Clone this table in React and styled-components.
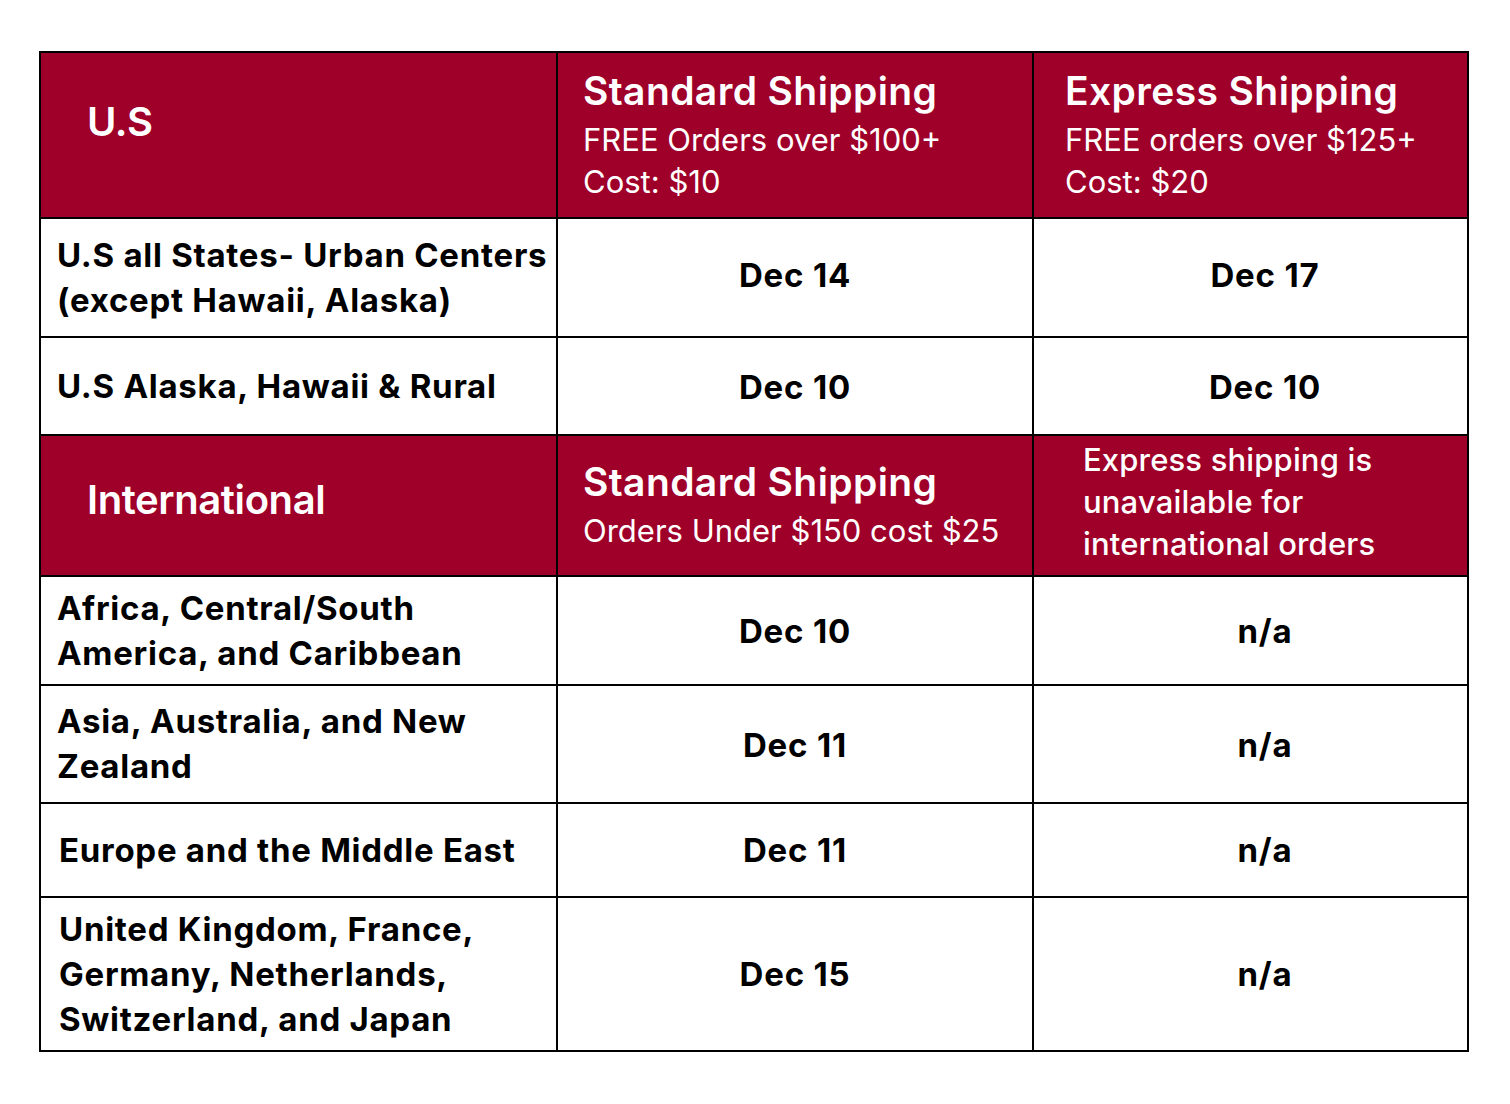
import React from "react";
import styled, { createGlobalStyle } from "styled-components";

const GlobalStyle = createGlobalStyle`
  html, body {
    margin: 0;
    padding: 0;
    background: #ffffff;
  }
  body {
    font-family: Inter, "Noto Sans", "Liberation Sans", sans-serif;
    color: #000;
  }
`;

const Page = styled.div`
  padding: 51px 0 0 39px;
`;

const Table = styled.div`
  display: grid;
  width: 1430px;
  grid-template-columns: 515px 474px 433px;
  grid-template-rows: 164px 117px 96px 139px 107px 116px 92px 152px;
  gap: 2px;
  padding: 2px;
  box-sizing: border-box;
  background: #000;
`;

const Cell = styled.div`
  display: flex;
  flex-direction: column;
  justify-content: center;
  align-items: ${p => (p.$center ? "center" : "flex-start")};
  padding: 0 0 0 ${p => p.$pl || 0}px;
  background: ${p => (p.$head ? "#9f0029" : "#ffffff")};
  color: ${p => (p.$head ? "#ffffff" : "#000000")};
  box-sizing: border-box;
`;

const Region = styled.div`
  font-size: 40px;
  font-weight: 600;
  letter-spacing: -0.01em;
  line-height: 46px;
  margin-top: ${p => p.$mt || 0}px;
`;

const Title = styled.div`
  font-size: 39px;
  font-weight: 600;
  letter-spacing: 0.01em;
  line-height: 46px;
  margin-bottom: 5px;
`;

const Sub = styled.div`
  font-size: 31px;
  font-weight: 400;
  line-height: 42px;
`;

const Note = styled.div`
  font-size: 31px;
  font-weight: 500;
  letter-spacing: 0.005em;
  line-height: 42px;
`;

const NoteBlock = styled.div`
  margin-top: -8px;
`;

const Place = styled.div`
  font-size: 33px;
  font-weight: 700;
  letter-spacing: 0.022em;
  line-height: 45px;
`;

const Date = styled.div`
  font-size: 33px;
  font-weight: 700;
  letter-spacing: 0.025em;
  line-height: 45px;
  margin-top: ${p => p.$mt || 0}px;
`;

const usRows = [
  { place: ["U.S all States- Urban Centers", "(except Hawaii, Alaska)"], std: "Dec 14", exp: "Dec 17", mt: -5 },
  { place: ["U.S Alaska, Hawaii & Rural"], std: "Dec 10", exp: "Dec 10", mt: 2 },
];

const intlRows = [
  { place: ["Africa, Central/South", "America, and Caribbean"], std: "Dec 10", exp: "n/a", mt: 2 },
  { place: ["Asia, Australia, and New", "Zealand"], std: "Dec 11", exp: "n/a", mt: 2 },
  { place: ["Europe and the Middle East"], std: "Dec 11", exp: "n/a", pl: 18 },
  { place: ["United Kingdom, France,", "Germany, Netherlands,", "Switzerland, and Japan"], std: "Dec 15", exp: "n/a", pl: 18 },
];

const BodyRow = ({ row }) => (
  <>
    <Cell $pl={row.pl || 16}>
      <Place>
        {row.place.map((line, i) => (
          <div key={i}>{line}</div>
        ))}
      </Place>
    </Cell>
    <Cell $center>
      <Date $mt={row.mt}>{row.std}</Date>
    </Cell>
    <Cell $center $pl={29}>
      <Date $mt={row.mt}>{row.exp}</Date>
    </Cell>
  </>
);

export default function App() {
  return (
    <Page>
      <GlobalStyle />
      <Table>
        <Cell $head $pl={46}>
          <Region $mt={-26}>U.S</Region>
        </Cell>
        <Cell $head $pl={25}>
          <Title>Standard Shipping</Title>
          <Sub>FREE Orders over $100+</Sub>
          <Sub>Cost: $10</Sub>
        </Cell>
        <Cell $head $pl={31}>
          <Title>Express Shipping</Title>
          <Sub>FREE orders over $125+</Sub>
          <Sub>Cost: $20</Sub>
        </Cell>

        {usRows.map((row, i) => (
          <BodyRow key={i} row={row} />
        ))}

        <Cell $head $pl={46}>
          <Region $mt={-12}>International</Region>
        </Cell>
        <Cell $head $pl={25}>
          <Title>Standard Shipping</Title>
          <Sub>Orders Under $150 cost $25</Sub>
        </Cell>
        <Cell $head $pl={49}>
          <NoteBlock>
            <Note>Express shipping is</Note>
            <Note>unavailable for</Note>
            <Note>international orders</Note>
          </NoteBlock>
        </Cell>

        {intlRows.map((row, i) => (
          <BodyRow key={i} row={row} />
        ))}
      </Table>
    </Page>
  );
}
